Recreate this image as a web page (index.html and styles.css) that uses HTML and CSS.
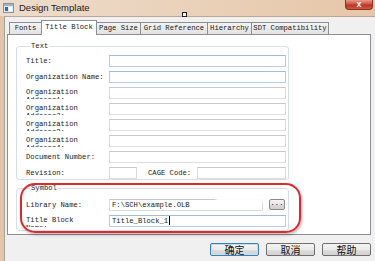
FILE: index.html
```html
<!DOCTYPE html>
<html>
<head>
<meta charset="utf-8">
<link rel="stylesheet" href="styles.css">
</head>
<body>
<div class="window">
  <div class="titlebar">
    <svg class="appicon" width="11" height="10" viewBox="0 0 11 10">
      <rect x="0.5" y="0.5" width="10" height="9" fill="#e3e9ef" stroke="#8795a3"/>
      <rect x="1" y="1" width="9" height="2" fill="#9fb3c6"/>
      <rect x="2" y="4" width="3" height="4" fill="#2f6db3"/>
      <rect x="6" y="4" width="3" height="4" fill="#ffffff"/>
    </svg>
    <span class="title">Design Template</span>
    <div class="close">x</div>
  </div>
  <div class="client">
    <div class="tabs">
      <div class="tab w-fonts">Fonts</div>
      <div class="tab active w-title">Title Block</div>
      <div class="tab w-page">Page Size</div>
      <div class="tab w-grid">Grid Reference</div>
      <div class="tab w-hier">Hierarchy</div>
      <div class="tab w-sdt">SDT Compatibility</div>
    </div>
    <div class="panel">
      <fieldset class="group text-group">
        <legend>Text</legend>
        <div class="row"><div class="label">Title:</div><div class="field blue"></div></div>
        <div class="row"><div class="label">Organization Name:</div><div class="field blue"></div></div>
        <div class="row"><div class="label two">Organization Address1:</div><div class="field"></div></div>
        <div class="row"><div class="label two">Organization Address2:</div><div class="field"></div></div>
        <div class="row"><div class="label two">Organization Address3:</div><div class="field"></div></div>
        <div class="row"><div class="label two">Organization Address4:</div><div class="field"></div></div>
        <div class="row"><div class="label">Document Number:</div><div class="field"></div></div>
        <div class="row"><div class="label">Revision:</div><div class="field rev"></div><div class="label cage">CAGE Code:</div><div class="field"></div></div>
      </fieldset>
      <fieldset class="group symbol-group">
        <legend>Symbol</legend>
        <div class="row"><div class="label">Library Name:</div><div class="field">F:\SCH\example.OLB</div><div class="browse">...</div></div>
        <div class="row"><div class="label two narrow">Title Block Name:</div><div class="field blue">Title_Block_1<span class="caret"></span></div></div>
      </fieldset>
    </div>
    <div class="buttons">
      <div class="btn default">确定</div>
      <div class="btn">取消</div>
      <div class="btn">帮助</div>
    </div>
    <div class="redact"></div>
    <div class="annotation"></div>
  </div>
  <div class="handle"></div>
</div>
</body>
</html>
```
FILE: styles.css
```css
html, body {
  margin: 0;
  padding: 0;
}
body {
  width: 375px;
  height: 261px;
  overflow: hidden;
  background: #e4c5a7;
}
.window {
  position: relative;
  width: 375px;
  height: 261px;
  display: flex;
  flex-direction: column;
}
.titlebar {
  height: 16px;
  display: flex;
  align-items: center;
  background: linear-gradient(to right, #eddccc, #e9cfb6 60%, #e6c6a8);
  flex-shrink: 0;
}
.appicon {
  margin-left: 3px;
  margin-top: -1px;
  flex-shrink: 0;
}
.title {
  margin-left: 5px;
  font-family: "Liberation Sans", Arial, sans-serif;
  font-size: 9.5px;
  color: #1c1c1c;
  margin-top: -1px;
}
.close {
  margin-left: auto;
  margin-right: 2px;
  align-self: flex-start;
  width: 28px;
  height: 10px;
  box-sizing: border-box;
  border: 1px solid #8a3025;
  border-top: none;
  border-radius: 0 0 4px 4px;
  background: linear-gradient(#e49a86, #cf5442 45%, #b73424 55%, #d0573f);
  color: #fff;
  font-family: "Liberation Sans", Arial, sans-serif;
  font-weight: bold;
  font-size: 9px;
  line-height: 8px;
  text-align: center;
}
.client {
  position: relative;
  flex: 1;
  margin-left: 4px;
  background: #f0f0f0;
  border-left: 1px solid #a3a3a3;
  border-top: 1px solid #b8a898;
  padding: 3px 0 0 2px;
  font-family: "Liberation Mono", "Courier New", monospace;
  font-size: 7.2px;
  color: #1a1a1a;
}
.tabs {
  display: flex;
  align-items: flex-end;
  height: 14px;
  padding-left: 2px;
}
.tab {
  box-sizing: border-box;
  height: 12px;
  border: 1px solid #8c8e94;
  border-bottom: none;
  margin-left: -1px;
  background: linear-gradient(#f2f2f2, #e3e3e3);
  text-align: center;
  line-height: 11px;
  white-space: nowrap;
}
.tab:first-child {
  margin-left: 0;
}
.tab.active {
  position: relative;
  z-index: 1;
  height: 15px;
  margin-bottom: -1px;
  background: #ffffff;
  line-height: 13px;
}
.w-fonts { width: 33px; }
.w-title { width: 56px; }
.w-page { width: 45px; }
.w-grid { width: 68px; }
.w-hier { width: 45px; }
.w-sdt { width: 78px; }
.panel {
  box-sizing: border-box;
  width: 364px;
  height: 201px;
  background: #ffffff;
  border: 1px solid #8c8e94;
  padding: 7px 0 0 8px;
}
.group {
  box-sizing: border-box;
  width: 273px;
  margin: 0;
  border: 1px solid #d5dfe5;
  border-radius: 3px;
  padding: 5px 2px 0 9px;
  min-width: 0;
}
.group legend {
  padding: 0 1px;
  margin-left: 4px;
  line-height: 8px;
  height: 8px;
}
.text-group {
  display: flex;
  flex-direction: column;
  gap: 4px;
  padding-bottom: 0;
}
.symbol-group {
  margin-top: 4px;
  padding-top: 7px;
  padding-bottom: 3px;
  display: flex;
  flex-direction: column;
  gap: 4px;
}
.row {
  display: flex;
  height: 12px;
}
.label {
  width: 83px;
  flex-shrink: 0;
  line-height: 12px;
  height: 12px;
  overflow: hidden;
  white-space: nowrap;
}
.label.two {
  white-space: normal;
  line-height: 8px;
  padding-top: 1px;
  box-sizing: border-box;
  width: 80px;
  margin-right: 3px;
}
.label.two.narrow {
  width: 60px;
  margin-right: 23px;
}
.label.cage {
  width: 49px;
  margin-left: 11px;
}
.field {
  flex: 1;
  box-sizing: border-box;
  height: 12px;
  border: 1px solid #dcdcdc;
  border-top-color: #c8c8c8;
  background: #fff;
  padding-left: 2px;
  line-height: 10px;
  white-space: nowrap;
  overflow: hidden;
}
.field.blue {
  border-color: #b9cde0;
  border-top-color: #a4bcd3;
}
.field.rev {
  flex: 0 0 28px;
}
.browse {
  flex: 0 0 16px;
  box-sizing: border-box;
  height: 11px;
  margin-left: 6px;
  margin-right: 1px;
  border: 1px solid #8a8a8a;
  border-radius: 2px;
  background: linear-gradient(#f4f4f4, #e6e6e6 50%, #d8d8d8 51%, #cfcfcf);
  text-align: center;
  line-height: 7px;
}
.caret {
  display: inline-block;
  width: 1px;
  height: 9px;
  background: #000;
  vertical-align: -2px;
  margin-left: 1px;
}
.buttons {
  display: flex;
  justify-content: flex-end;
  gap: 7px;
  margin-top: 8px;
  width: 364px;
}
.btn {
  box-sizing: border-box;
  width: 49px;
  height: 13px;
  border: 1px solid #707070;
  border-radius: 2px;
  background: linear-gradient(#f3f3f3, #ebebeb 50%, #dddddd 51%, #d2d2d2);
  font-family: "Noto Sans CJK SC", sans-serif;
  font-size: 10px;
  line-height: 11px;
  text-align: center;
  color: #111;
}
.btn.default {
  border-color: #3c7fb1;
  box-shadow: inset 0 0 0 1px #bfe0f6;
}
.annotation {
  position: absolute;
  left: 15px;
  top: 166px;
  width: 281px;
  height: 50px;
  box-sizing: border-box;
  border: 2px solid #e3262d;
  border-radius: 15px;
  box-shadow: 1px 2px 3px rgba(0, 0, 0, 0.25);
}
.redact {
  position: absolute;
  left: 211px;
  top: 177px;
  width: 48px;
  height: 8px;
  background: #ffffff;
  filter: blur(1.5px);
}
.handle {
  position: absolute;
  left: 182px;
  top: 12px;
  width: 5px;
  height: 5px;
  box-sizing: border-box;
  border: 1px solid #202020;
  background: #ffffff;
}
```
